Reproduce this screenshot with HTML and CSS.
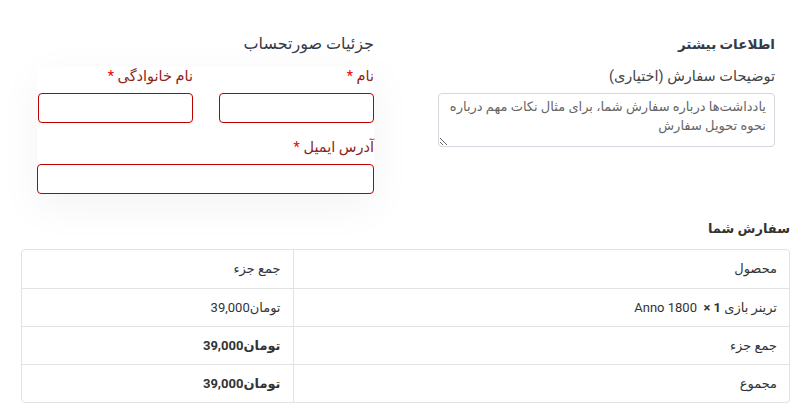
FILE: index.html
```html
<!DOCTYPE html>
<html lang="fa" dir="rtl">
<head>
<meta charset="utf-8">
<link rel="stylesheet" href="styles.css">
</head>
<body>
<div class="page">
  <div class="cols">
    <section class="col">
      <h3 class="heading bold">اطلاعات بیشتر</h3>
      <label class="label plain">توضیحات سفارش (اختیاری)</label>
      <textarea class="notes" placeholder="یادداشت‌ها درباره سفارش شما، برای مثال نکات مهم درباره نحوه تحویل سفارش"></textarea>
    </section>
    <section class="col">
      <h3 class="heading">جزئیات صورتحساب</h3>
      <div class="fields">
        <div class="row">
          <div class="field">
            <label class="label">نام <span class="req">*</span></label>
            <input class="input" type="text">
          </div>
          <div class="field">
            <label class="label">نام خانوادگی <span class="req">*</span></label>
            <input class="input" type="text">
          </div>
        </div>
        <div class="field wide">
          <label class="label">آدرس ایمیل <span class="req">*</span></label>
          <input class="input" type="email">
        </div>
      </div>
    </section>
  </div>
  <h3 class="order-title">سفارش شما</h3>
  <div class="table-wrap">
    <table class="order">
      <colgroup><col class="c-product"><col class="c-total"></colgroup>
      <thead>
        <tr><th>محصول</th><th>جمع جزء</th></tr>
      </thead>
      <tbody>
        <tr><td>ترینر بازی Anno 1800&nbsp; <strong class="qty">× 1</strong></td><td><span class="amt">39,000<span>تومان</span></span></td></tr>
      </tbody>
      <tfoot>
        <tr><th>جمع جزء</th><td><b class="amt">39,000<span>تومان</span></b></td></tr>
        <tr><th>مجموع</th><td><b class="amt">39,000<span>تومان</span></b></td></tr>
      </tfoot>
    </table>
  </div>
</div>
</body>
</html>
```
FILE: styles.css
```css
* { box-sizing: border-box; }
html, body { margin: 0; background: #fff; }
body {
  direction: rtl;
  font-family: Roboto, "DejaVu Sans", sans-serif;
  font-size: 13px;
  color: #333;
}
.page {
  padding: 0 14px 0 21px;
  width: 804px;
}
.cols {
  display: flex;
  gap: 64px;
  padding: 32px 15px 0 16px;
}
.col {
  width: 337px;
}
.fields {
  box-shadow: 0 12px 44px rgba(0,0,0,0.05);
}
.heading {
  margin: 0 0 11px;
  font-size: 16px;
  font-weight: normal;
  color: #353b48;
  line-height: 24px;
}
.heading.bold { font-weight: bold; font-size: 13.5px; }
.label {
  display: block;
  font-size: 14.5px;
  line-height: 20px;
  color: #8e2418;
  margin-bottom: 6px;
  white-space: nowrap;
}
.label.plain { color: #444; }
.req { color: #e00; }
.notes {
  display: block;
  width: 337px;
  height: 54px;
  resize: vertical;
  border: 1px solid #d3d8de;
  border-radius: 4px;
  padding: 3px 8px;
  font-family: Roboto, "DejaVu Sans", sans-serif;
  font-size: 13px;
  line-height: 19px;
  direction: rtl;
  margin: 0;
}
.notes::placeholder { color: #666; }
.row {
  display: flex;
  gap: 26px;
}
.field { width: 155px; margin-bottom: 15px; }
.field.wide { width: 337px; margin-bottom: 0; }
.input {
  display: block;
  width: 100%;
  height: 30px;
  border: 1px solid #b00;
  border-radius: 4px;
  background: #fff;
  margin: 0;
}
.order-title {
  margin: 25px 0 10px;
  font-size: 13px;
  font-weight: bold;
  line-height: 20px;
  color: #333;
}
.table-wrap {
  border: 1px solid #e2e2e2;
  border-radius: 4px;
  overflow: hidden;
}
.order {
  width: 100%;
  border-collapse: collapse;
  table-layout: fixed;
}
.c-product { width: 496px; }
.order th, .order td {
  text-align: right;
  padding: 0 12px;
  height: 38px;
  font-size: 13px;
  font-weight: normal;
  color: #333;
  border-top: 1px solid #e2e2e2;
}
.order thead th { border-top: none; height: 38px; }
.order td + td, .order th + th, .order th + td { border-right: 1px solid #e2e2e2; }
.qty { font-weight: bold; }
.amt { direction: ltr; unicode-bidi: isolate; }
b.amt { font-weight: bold; }
```
